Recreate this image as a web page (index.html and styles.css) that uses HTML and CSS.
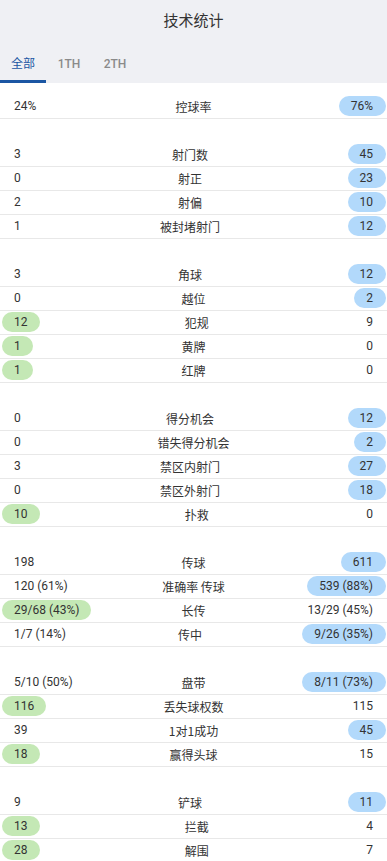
FILE: index.html
```html
<!DOCTYPE html>
<html lang="zh">
<head>
<meta charset="utf-8">
<title>技术统计</title>
<link rel="stylesheet" href="styles.css">
</head>
<body>
<header class="top">
  <h1 class="title">技术统计</h1>
  <nav class="tabs">
    <span class="tab active">全部</span>
    <span class="tab">1TH</span>
    <span class="tab">2TH</span>
  </nav>
</header>
<main class="stats">
  <section class="group first">
    <div class="row"><span class="val">24%</span><span class="label">控球率</span><span class="val r blue">76%</span></div>
  </section>
  <section class="group">
    <div class="row"><span class="val">3</span><span class="label">射门数</span><span class="val r blue">45</span></div>
    <div class="row"><span class="val">0</span><span class="label">射正</span><span class="val r blue">23</span></div>
    <div class="row"><span class="val">2</span><span class="label">射偏</span><span class="val r blue">10</span></div>
    <div class="row"><span class="val">1</span><span class="label">被封堵射门</span><span class="val r blue">12</span></div>
  </section>
  <section class="group">
    <div class="row"><span class="val">3</span><span class="label">角球</span><span class="val r blue">12</span></div>
    <div class="row"><span class="val">0</span><span class="label">越位</span><span class="val r blue">2</span></div>
    <div class="row"><span class="val green">12</span><span class="label">犯规</span><span class="val r">9</span></div>
    <div class="row"><span class="val green">1</span><span class="label">黄牌</span><span class="val r">0</span></div>
    <div class="row"><span class="val green">1</span><span class="label">红牌</span><span class="val r">0</span></div>
  </section>
  <section class="group">
    <div class="row"><span class="val">0</span><span class="label">得分机会</span><span class="val r blue">12</span></div>
    <div class="row"><span class="val">0</span><span class="label">错失得分机会</span><span class="val r blue">2</span></div>
    <div class="row"><span class="val">3</span><span class="label">禁区内射门</span><span class="val r blue">27</span></div>
    <div class="row"><span class="val">0</span><span class="label">禁区外射门</span><span class="val r blue">18</span></div>
    <div class="row"><span class="val green">10</span><span class="label">扑救</span><span class="val r">0</span></div>
  </section>
  <section class="group">
    <div class="row"><span class="val">198</span><span class="label">传球</span><span class="val r blue">611</span></div>
    <div class="row"><span class="val">120 (61%)</span><span class="label">准确率 传球</span><span class="val r blue">539 (88%)</span></div>
    <div class="row"><span class="val green">29/68 (43%)</span><span class="label">长传</span><span class="val r">13/29 (45%)</span></div>
    <div class="row"><span class="val">1/7 (14%)</span><span class="label">传中</span><span class="val r blue">9/26 (35%)</span></div>
  </section>
  <section class="group">
    <div class="row"><span class="val">5/10 (50%)</span><span class="label">盘带</span><span class="val r blue">8/11 (73%)</span></div>
    <div class="row"><span class="val green">116</span><span class="label">丢失球权数</span><span class="val r">115</span></div>
    <div class="row"><span class="val">39</span><span class="label">1对1成功</span><span class="val r blue">45</span></div>
    <div class="row"><span class="val green">18</span><span class="label">赢得头球</span><span class="val r">15</span></div>
  </section>
  <section class="group">
    <div class="row"><span class="val">9</span><span class="label">铲球</span><span class="val r blue">11</span></div>
    <div class="row"><span class="val green">13</span><span class="label">拦截</span><span class="val r">4</span></div>
    <div class="row"><span class="val green">28</span><span class="label">解围</span><span class="val r">7</span></div>
  </section>
</main>
</body>
</html>
```
FILE: styles.css
```css
* { box-sizing: border-box; }
body {
  margin: 0;
  background: #ffffff;
  font-family: Roboto, "Noto Sans CJK SC", sans-serif;
  color: #333333;
}
.top {
  background: #eff0f4;
  height: 83px;
  display: flex;
  flex-direction: column;
}
.title {
  margin: 0;
  height: 41px;
  line-height: 40px;
  text-align: center;
  font-size: 15px;
  font-weight: 400;
  color: #333333;
  font-family: "Noto Sans CJK SC", sans-serif;
}
.tabs {
  display: flex;
  height: 42px;
}
.tab {
  width: 46px;
  text-align: center;
  font-size: 12px;
  font-weight: 500;
  color: #8a8a8a;
  line-height: 40px;
  padding-top: 3px;
  border-bottom: 3px solid transparent;
}
.tab.active {
  color: #1b56a3;
  font-weight: 400;
  border-bottom-color: #1b56a3;
}
.group { margin-top: 24px; }
.group.first { margin-top: 12px; }
.row {
  display: flex;
  align-items: center;
  height: 24px;
  padding: 0 1px 1px 2px;
  border-bottom: 1px solid #e8e8e8;
  font-size: 12px;
}
.label {
  flex: 1;
  text-align: center;
  font-family: "Noto Sans CJK SC", sans-serif;
  font-size: 12px;
  white-space: nowrap;
}
.val {
  height: 20px;
  line-height: 20px;
  padding: 0 12px;
  border-radius: 10px;
  white-space: nowrap;
}
.val.r { padding: 0 13px 0 12px; }
.blue { background: #b2d9fb; }
.green { background: #c4e8b5; }
```
